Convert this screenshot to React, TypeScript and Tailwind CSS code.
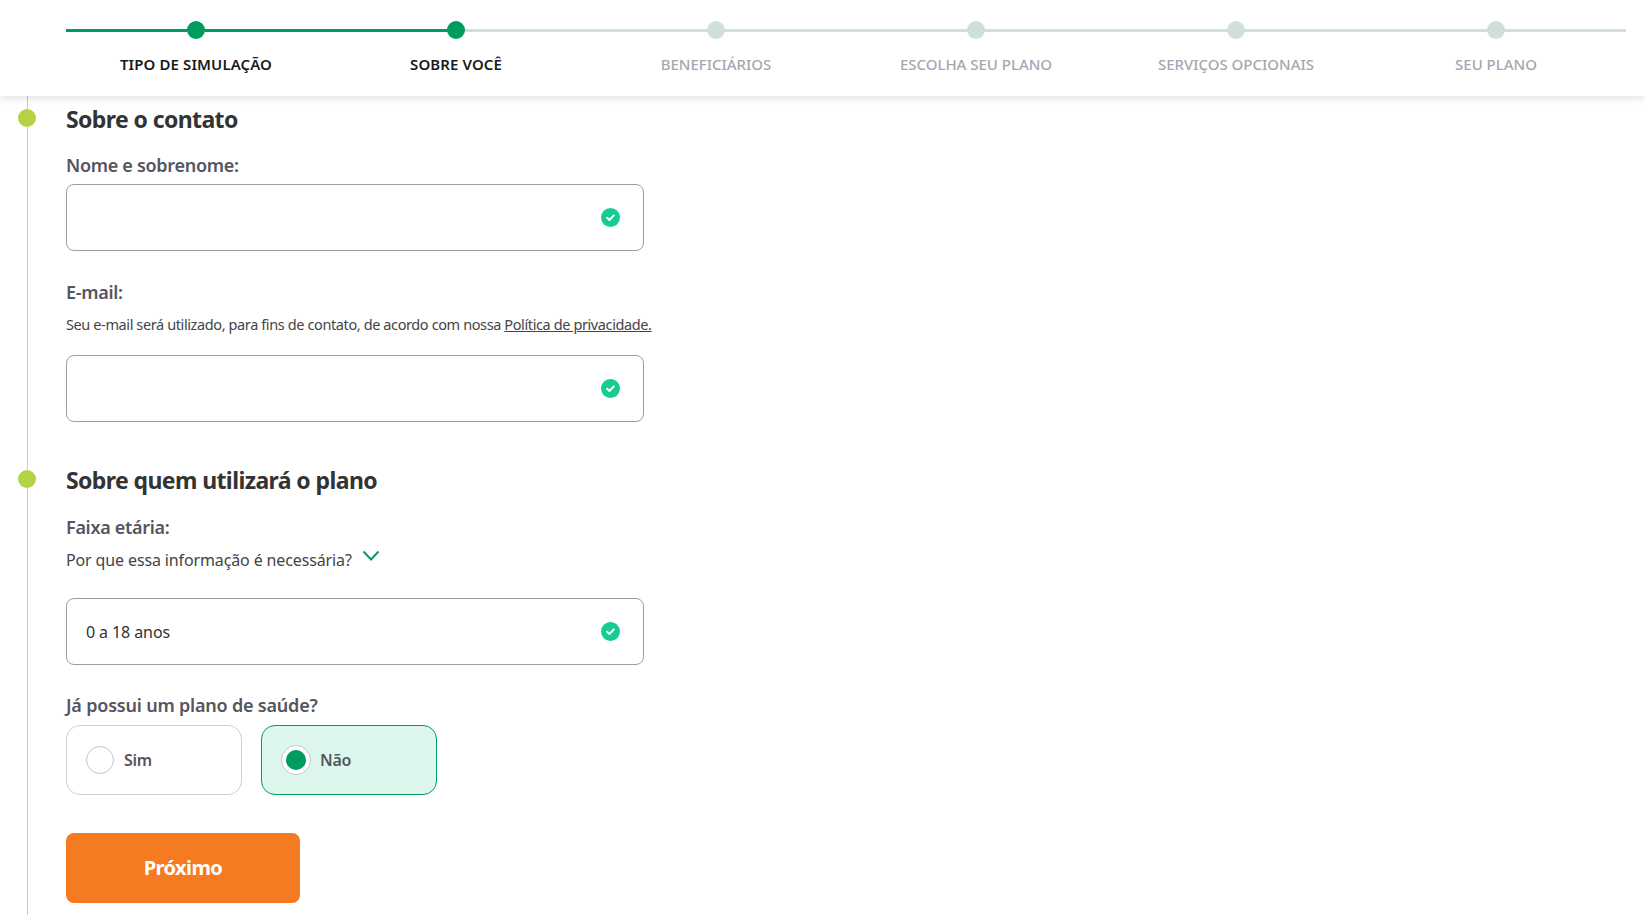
const font = "font-['Noto_Sans',sans-serif]";

const steps = [
  { label: "TIPO DE SIMULAÇÃO", state: "done" },
  { label: "SOBRE VOCÊ", state: "current" },
  { label: "BENEFICIÁRIOS", state: "todo" },
  { label: "ESCOLHA SEU PLANO", state: "todo" },
  { label: "SERVIÇOS OPCIONAIS", state: "todo" },
  { label: "SEU PLANO", state: "todo" },
];

function Stepper() {
  return (
    <header className="relative z-10 h-[96px] bg-white pl-[66px] pt-[21px] shadow-[0_2px_8px_rgba(0,0,0,0.12)]">
      <div className="flex w-[1560px]">
        {steps.map((step) => {
          const active = step.state !== "todo";
          return (
            <div key={step.label} className="relative flex w-[260px] flex-col items-center">
              <div className={step.state === "current" ? "absolute left-0 top-[8px] h-[3px] w-1/2 bg-[#009b5e]" : active ? "absolute left-0 top-[8px] h-[3px] w-full bg-[#009b5e]" : "absolute left-0 top-[8px] h-[3px] w-full bg-[#d0dfd9]"} />
              {step.state === "current" && <div className="absolute right-0 top-[8px] h-[3px] w-1/2 bg-[#d0dfd9]" />}
              <div className={active ? "relative h-[18px] w-[18px] rounded-full bg-[#009b5e]" : "relative h-[18px] w-[18px] rounded-full bg-[#d0dfd9]"} />
              <span className={active ? "mt-[13px] text-[15px] leading-[24px] font-semibold tracking-[0.1px] text-[#1a1a1a]" : "mt-[13px] text-[15px] leading-[24px] font-medium tracking-[-0.02px] text-[#a6a6b2]"}>
                {step.label}
              </span>
            </div>
          );
        })}
      </div>
    </header>
  );
}

function CheckBadge() {
  return (
    <svg width="19" height="19" viewBox="0 0 20 20" className="shrink-0">
      <circle cx="10" cy="10" r="10" fill="#17cc92" />
      <path d="M6.4 10.2l2.5 2.4 4.6-4.8" fill="none" stroke="#fff" strokeWidth="2" strokeLinecap="round" strokeLinejoin="round" />
    </svg>
  );
}

function Field({ value }: { value?: string }) {
  return (
    <div className="flex h-[67px] w-[578px] items-center justify-between rounded-[8px] border border-[#9d9da8] bg-white pl-[19px] pr-[23px]">
      <span className="text-[16px] tracking-[-0.1px] text-[#333]">{value}</span>
      <CheckBadge />
    </div>
  );
}

export default function App() {
  return (
    <div className={`h-[915px] overflow-hidden bg-white ${font}`}>
      <Stepper />
      <main className="relative ml-[27px] h-[819px] border-l-[1.5px] border-[#c6cbcb] pl-[38px]">
        <section>
          <h2 className="pt-[7px] text-[23px] leading-[32px] font-bold tracking-[-0.6px] text-[#333]">Sobre o contato</h2>
          <label className="mt-[16px] block text-[18px] leading-[28px] font-semibold tracking-[-0.3px] text-[#55555f]">Nome e sobrenome:</label>
          <div className="mt-[5px]"><Field /></div>
          <label className="mt-[27px] block text-[18px] leading-[28px] font-semibold tracking-[-0.3px] text-[#55555f]">E-mail:</label>
          <p className="mt-[6px] text-[14.5px] leading-[24px] tracking-[-0.39px] text-[#444]">
            Seu e-mail será utilizado, para fins de contato, de acordo com nossa <a className="underline">Política de privacidade.</a>
          </p>
          <div className="mt-[19px]"><Field /></div>
        </section>
        <section className="mt-[42px]">
          <h2 className="text-[23px] leading-[32px] font-bold tracking-[-0.6px] text-[#333]">Sobre quem utilizará o plano</h2>
          <label className="mt-[17px] block text-[18px] leading-[28px] font-semibold tracking-[-0.3px] text-[#55555f]">Faixa etária:</label>
          <div className="mt-[5px] flex items-start gap-[10px]">
            <span className="text-[16px] leading-[28px] tracking-[-0.13px] text-[#444]">Por que essa informação é necessária?</span>
            <svg width="18" height="12" viewBox="0 0 18 12" className="mt-[4px]">
              <path d="M1.5 1.5L9 9.5l7.5-8" fill="none" stroke="#009b5e" strokeWidth="2" />
            </svg>
          </div>
          <div className="mt-[24px]"><Field value="0 a 18 anos" /></div>
          <label className="mt-[26px] block text-[18px] leading-[28px] font-semibold tracking-[-0.2px] text-[#55555f]">Já possui um plano de saúde?</label>
          <div className="mt-[6px] flex gap-[19px]">
            <div className="flex h-[70px] w-[176px] items-center gap-[10px] rounded-[14px] border border-[#cfcfd4] bg-white pl-[19px]">
              <span className="h-[28px] w-[28px] rounded-full border border-[#c6c6cc] bg-white" />
              <span className="text-[16px] font-semibold tracking-[-0.3px] text-[#55555f]">Sim</span>
            </div>
            <div className="flex h-[70px] w-[176px] items-center gap-[9px] rounded-[14px] border border-[#009b5e] bg-[#def7ec] pl-[19px]">
              <span className="flex h-[30px] w-[30px] items-center justify-center rounded-full border border-[#c6c6cc] bg-white">
                <span className="h-[20px] w-[20px] rounded-full bg-[#009b5e]" />
              </span>
              <span className="text-[16px] font-semibold tracking-[-0.3px] text-[#55555f]">Não</span>
            </div>
          </div>
          <button className="mt-[38px] h-[70px] w-[234px] rounded-[8px] bg-[#f67a21] text-[20px] font-bold tracking-[-0.6px] text-white">Próximo</button>
        </section>
        <div className="absolute left-[-10px] top-[13px] h-[18px] w-[18px] rounded-full bg-[#b4d344]" />
        <div className="absolute left-[-10px] top-[374px] h-[18px] w-[18px] rounded-full bg-[#b4d344]" />
      </main>
    </div>
  );
}
